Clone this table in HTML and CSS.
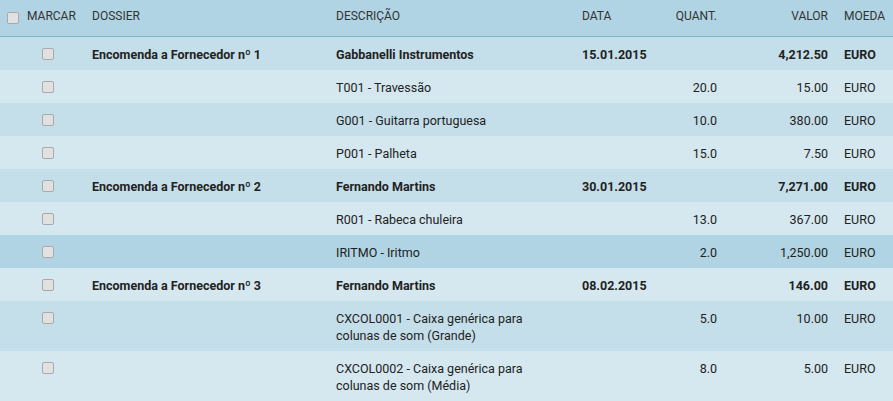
FILE: index.html
```html
<!DOCTYPE html>
<html lang="pt">
<head>
<meta charset="utf-8">
<title>Encomendas</title>
<link rel="stylesheet" href="styles.css">
</head>
<body>
<table class="grid">
  <colgroup>
    <col class="c-marcar"><col class="c-dossier"><col class="c-desc"><col class="c-data"><col class="c-quant"><col class="c-valor"><col class="c-moeda">
  </colgroup>
  <thead>
    <tr>
      <th class="h-marcar"><span class="cb cb-head"></span><span>MARCAR</span></th>
      <th>DOSSIER</th>
      <th>DESCRIÇÃO</th>
      <th>DATA</th>
      <th class="num">QUANT.</th>
      <th class="num">VALOR</th>
      <th>MOEDA</th>
    </tr>
  </thead>
  <tbody>
    <tr class="group">
      <td class="mark"><span class="cb"></span></td>
      <td>Encomenda a Fornecedor nº 1</td>
      <td>Gabbanelli Instrumentos</td>
      <td>15.01.2015</td>
      <td class="num"></td>
      <td class="num">4,212.50</td>
      <td>EURO</td>
    </tr>
    <tr>
      <td class="mark"><span class="cb"></span></td>
      <td></td>
      <td>T001 - Travessão</td>
      <td></td>
      <td class="num">20.0</td>
      <td class="num">15.00</td>
      <td>EURO</td>
    </tr>
    <tr>
      <td class="mark"><span class="cb"></span></td>
      <td></td>
      <td>G001 - Guitarra portuguesa</td>
      <td></td>
      <td class="num">10.0</td>
      <td class="num">380.00</td>
      <td>EURO</td>
    </tr>
    <tr>
      <td class="mark"><span class="cb"></span></td>
      <td></td>
      <td>P001 - Palheta</td>
      <td></td>
      <td class="num">15.0</td>
      <td class="num">7.50</td>
      <td>EURO</td>
    </tr>
    <tr class="group">
      <td class="mark"><span class="cb"></span></td>
      <td>Encomenda a Fornecedor nº 2</td>
      <td>Fernando Martins</td>
      <td>30.01.2015</td>
      <td class="num"></td>
      <td class="num">7,271.00</td>
      <td>EURO</td>
    </tr>
    <tr>
      <td class="mark"><span class="cb"></span></td>
      <td></td>
      <td>R001 - Rabeca chuleira</td>
      <td></td>
      <td class="num">13.0</td>
      <td class="num">367.00</td>
      <td>EURO</td>
    </tr>
    <tr class="hover">
      <td class="mark"><span class="cb"></span></td>
      <td></td>
      <td>IRITMO - Iritmo</td>
      <td></td>
      <td class="num">2.0</td>
      <td class="num">1,250.00</td>
      <td>EURO</td>
    </tr>
    <tr class="group">
      <td class="mark"><span class="cb"></span></td>
      <td>Encomenda a Fornecedor nº 3</td>
      <td>Fernando Martins</td>
      <td>08.02.2015</td>
      <td class="num"></td>
      <td class="num">146.00</td>
      <td>EURO</td>
    </tr>
    <tr>
      <td class="mark"><span class="cb"></span></td>
      <td></td>
      <td>CXCOL0001 - Caixa genérica para colunas de som (Grande)</td>
      <td></td>
      <td class="num">5.0</td>
      <td class="num">10.00</td>
      <td>EURO</td>
    </tr>
    <tr>
      <td class="mark"><span class="cb"></span></td>
      <td></td>
      <td>CXCOL0002 - Caixa genérica para colunas de som (Média)</td>
      <td></td>
      <td class="num">8.0</td>
      <td class="num">5.00</td>
      <td>EURO</td>
    </tr>
  </tbody>
</table>
</body>
</html>
```

FILE: styles.css
```css
html, body {
  margin: 0;
  padding: 0;
  background: #d5e8f0;
}
body {
  width: 893px;
  font-family: Roboto, "Liberation Sans", sans-serif;
  font-size: 12.5px;
  color: #222;
}
.grid {
  width: 893px;
  border-collapse: collapse;
  table-layout: fixed;
}
.c-marcar { width: 84px; }
.c-dossier { width: 244px; }
.c-desc { width: 246px; }
.c-data { width: 86px; }
.c-quant { width: 65px; }
.c-valor { width: 111px; }
.c-moeda { width: 57px; }

.grid th {
  background: #b0d4e3;
  color: #333;
  font-size: 12px;
  font-weight: normal;
  text-align: left;
  line-height: 17px;
  padding: 8px 8px 11px;
  border-bottom: 1px solid #80b3cb;
  white-space: nowrap;
  vertical-align: top;
}
.grid th.h-marcar {
  padding-left: 7px;
  padding-right: 0;
}
.h-marcar span {
  display: inline-block;
  vertical-align: top;
}
.grid td {
  line-height: 17px;
  padding: 9px 8px 7px;
  vertical-align: top;
}
.grid tbody tr:nth-child(odd) td { background: #c5dfea; }
.grid tbody tr:nth-child(even) td { background: #d5e8f0; }
.grid tbody tr.hover td { background: #b0d4e3; }
.grid tr.group td { font-weight: bold; }
.num { text-align: right; }
.grid th.num { text-align: right; }

.cb {
  display: inline-block;
  box-sizing: border-box;
  width: 12px;
  height: 12px;
  border: 1px solid #a9a9a9;
  border-radius: 2px;
  background: #e1e1e1;
  vertical-align: top;
}
.cb-head {
  margin-top: 4px;
  margin-right: 8px;
}
.grid td.mark .cb {
  margin-top: 2px;
  margin-left: 34px;
}
```
